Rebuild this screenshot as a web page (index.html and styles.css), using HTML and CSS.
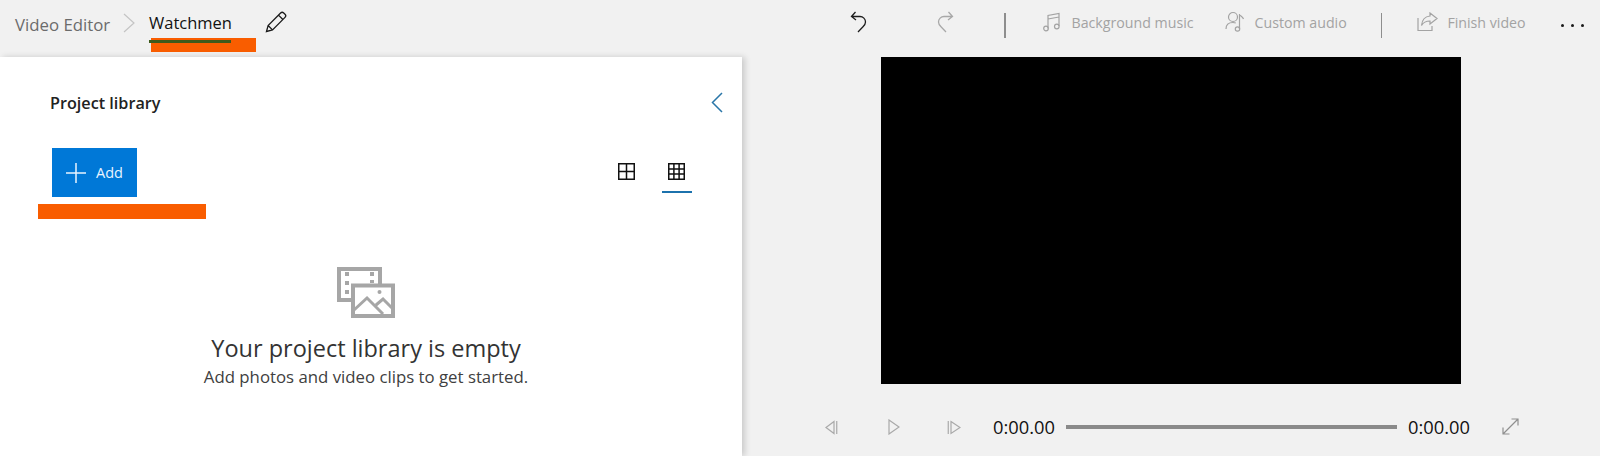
FILE: index.html
```html
<!DOCTYPE html>
<html lang="en">
<head>
<meta charset="utf-8">
<title>Video Editor</title>
<link rel="stylesheet" href="styles.css">
</head>
<body>
<header class="topbar">
  <nav class="crumbs">
    <span class="crumb-root">Video Editor</span>
    <svg class="crumb-chevron" width="12" height="20" viewBox="0 0 12 20"><path d="M1 1l10 9-10 9" /></svg>
    <span class="crumb-title">Watchmen<span class="redact redact-title"></span><span class="title-line"></span></span>
    <svg class="pencil" width="22" height="22" viewBox="0 0 22 22"><path d="M1.5 20.5l1.6-6L15.6 2a2.2 2.2 0 0 1 3.1 0l1.3 1.3a2.2 2.2 0 0 1 0 3.1L7.500 18.900zM3.100 14.500l4.400 4.400M13.500 4.100l4.400 4.400" /></svg>
  </nav>
  <div class="actions">
    <svg class="tool tool-undo" width="18" height="22" viewBox="0 0 18 22"><path d="M5.500 1L1.500 5.500 6 9M1.500 5.500H10a5.500 5.500 0 0 1 5.500 5.500c0 2-1 3.300-2.500 4.800L8 21" /></svg>
    <svg class="tool tool-redo" width="18" height="22" viewBox="0 0 18 22"><path d="M12.500 1l4 4.500L12 9M16.500 5.500H8A5.500 5.500 0 0 0 2.500 11c0 2 1 3.300 2.500 4.800L10 21" /></svg>
    <span class="divider divider-a"></span>
    <button class="action action-music">
      <svg width="18" height="20" viewBox="0 0 18 20"><path d="M5 16.500V3.500L16 1.500V14M5 7l11-2" /><circle cx="3" cy="16.500" r="2.300" /><circle cx="13.800" cy="14.500" r="2.300" /></svg>
      <span>Background music</span>
    </button>
    <button class="action action-audio">
      <svg width="21" height="22" viewBox="0 0 21 22"><circle cx="8" cy="6" r="4.500" /><path d="M1 18c0-4 2.500-6.500 7-6.500 1.200 0 2 .2 2.800.5M14.500 18V3c.3 2 3 2.500 4 5" /><circle cx="12.500" cy="18" r="2.200" /></svg>
      <span>Custom audio</span>
    </button>
    <span class="divider divider-b"></span>
    <button class="action action-finish">
      <svg width="21" height="20" viewBox="0 0 21 20"><path d="M1 6v12.500h14V14M13 1l7 5.500-7 5.500V9c-4 0-6.500 1-8.500 4.500C5 8 8 4.500 13 4z" /></svg>
      <span>Finish video</span>
    </button>
    <span class="more"><i></i><i></i><i></i></span>
  </div>
</header>

<main class="workspace">
  <section class="library">
    <div class="library-head">
      <h1>Project library</h1>
      <svg class="collapse" width="12" height="21" viewBox="0 0 12 21"><path d="M11 1L1.500 10.500 11 20" /></svg>
    </div>
    <div class="library-tools">
      <div class="add-wrap">
        <button class="add">
          <svg width="20" height="20" viewBox="0 0 20 20"><path d="M10 0v20M0 10h20" /></svg>
          <span>Add</span>
        </button>
        <span class="redact redact-add"></span>
      </div>
      <div class="views">
        <span class="view">
          <svg width="17" height="17" viewBox="0 0 17 17"><path d="M.75.75h15.500v15.500H.75zM8.500.75v15.500M.75 8.500h15.500" /></svg>
        </span>
        <span class="view view-active">
          <svg width="17" height="17" viewBox="0 0 17 17"><path d="M.75.75h15.500v15.500H.75zM5.900.75v15.500M11.100.75v15.500M.75 5.900h15.500M.75 11.100h15.500" /></svg>
        </span>
      </div>
    </div>
    <div class="empty">
      <svg class="empty-icon" width="58" height="51" viewBox="0 0 58 51">
        <path class="thick" d="M17 33H2V2H43V18" />
        <path class="thick" d="M16 18.500H56V49H16z" />
        <path class="dots" d="M8 5h4v4H8zM8 14h4v4H8zM8 23h4v4H8zM33 5h4v4h-4zM33 13h4v3h-4z" />
        <path class="thin" d="M17 43l13-12 16 16M39 38l7-6 9 9" />
        <circle class="dot" cx="42.500" cy="25" r="2" />
      </svg>
      <h2>Your project library is empty</h2>
      <p>Add photos and video clips to get started.</p>
    </div>
  </section>

  <section class="preview">
    <div class="screen"></div>
    <div class="transport">
      <svg class="t-icon t-prev" width="13" height="15" viewBox="0 0 13 15"><path d="M9 1.500L1 7.500l8 6zM11.750 1v13" /></svg>
      <svg class="t-icon t-play" width="12" height="16" viewBox="0 0 12 16"><path d="M1 1l10 7-10 7z" /></svg>
      <svg class="t-icon t-next" width="14" height="15" viewBox="0 0 14 15"><path d="M4 1.500l9 6-9 6zM1.250 1v13" /></svg>
      <span class="time">0:00.00</span>
      <span class="track"></span>
      <span class="time">0:00.00</span>
      <svg class="t-icon t-expand" width="17" height="17" viewBox="0 0 17 17"><path d="M1 16L16 1M9.500 1H16V7.500M1 9.500V16H7.500" /></svg>
    </div>
  </section>
</main>
</body>
</html>
```
FILE: styles.css
```css
* { box-sizing: border-box; }
html, body { height: 100%; }
body {
  margin: 0;
  height: 456px;
  overflow: hidden;
  display: flex;
  flex-direction: column;
  background: #f1f1f1;
  color: #000;
  font-family: "Open Sans", "Noto Sans", "Liberation Sans", sans-serif;
}
svg { display: block; fill: none; stroke: currentColor; flex: none; }
button { border: 0; background: none; font: inherit; padding: 0; color: inherit; }

.topbar {
  height: 57px;
  flex: none;
  display: flex;
  justify-content: space-between;
  align-items: flex-start;
}
.crumbs { display: flex; align-items: flex-start; padding-left: 15px; }
.crumb-root { font-size: 16.800px; line-height: 22px; margin-top: 14px; color: #6b6b6b; width: 108px; white-space: nowrap; }
.crumb-chevron { color: #c4c4c4; margin-top: 13px; stroke-width: 1.200; }
.crumb-title { position: relative; font-size: 16.500px; line-height: 22px; margin: 12px 0 0 14px; width: 116px; white-space: nowrap; color: #111; }
.pencil { color: #1a1a1a; margin-top: 11px; stroke-width: 1.300; }
.redact { position: absolute; background: #f95d00; display: block; }
.redact-title { left: 2px; top: 26px; width: 105px; height: 14px; }
.title-line { position: absolute; left: 0; top: 28px; width: 82px; height: 3px; background: #3e5a1c; }

.actions { display: flex; align-items: flex-start; padding-top: 11px; width: 750px; position: relative; }
.tool { stroke-width: 1.300; }
.tool-undo { color: #1d1d1d; }
.tool-redo { color: #a8a8a8; margin-left: 68px; }
.divider { width: 1.500px; height: 25px; background: #8e8e8e; flex: none; }
.divider-a { margin: 2px 0 0 50px; }
.divider-b { margin: 2px 0 0 34px; }
.action { display: flex; align-items: center; height: 22px; color: #a3a3a3; font-size: 14.200px; white-space: nowrap; }
.action svg { stroke-width: 1.200; }
.action-music { margin-left: 37px; gap: 11px; width: 182px; }
.action-audio { gap: 9px; }
.action-audio span { width: 92px; }
.action-finish { margin-left: 35px; gap: 9px; }
.action-finish span { width: 79px; }
.more { display: flex; gap: 7px; margin: 13px 0 0 35px; }
.more i { width: 3px; height: 3px; border-radius: 50%; background: #1a1a1a; display: block; }

.workspace { flex: 1; display: flex; min-height: 0; }
.library {
  width: 742px;
  flex: none;
  background: #fff;
  box-shadow: 3px 0 6px rgba(0, 0, 0, .16);
  padding: 34px 0 0 50px;
  position: relative;
}
.library-head { display: flex; justify-content: space-between; align-items: center; padding-right: 19px; }
.library-head h1 { margin: 0; font-size: 16.200px; line-height: 24px; font-weight: 600; color: #222; }
.collapse { color: #2a76a8; stroke-width: 1.500; margin-top: -2px; }
.library-tools { display: flex; justify-content: space-between; align-items: flex-start; margin-top: 33px; padding: 0 50px 0 2px; }
.add-wrap { position: relative; }
.add {
  width: 85px;
  height: 49px;
  background: #0078d7;
  color: #e8f4ff;
  display: flex;
  align-items: center;
  padding-left: 14px;
  gap: 10px;
  font-size: 14.500px;
}
.add svg { stroke-width: 1.500; }
.redact-add { left: -14px; top: 56px; width: 168px; height: 15px; }
.views { display: flex; gap: 20px; }
.view { width: 30px; height: 45px; padding: 15px 6.500px 0 5.500px; border-bottom: 2.500px solid transparent; }
.view svg { stroke-width: 1.500; color: #111; }
.view-active { border-bottom-color: #1c72ad; }

.empty { margin-top: 70px; display: flex; flex-direction: column; align-items: center; margin-left: -50px; padding-right: 10px; }
.empty-icon { color: #a6a6a6; }
.empty-icon .thick { stroke-width: 4; }
.empty-icon .thin { stroke-width: 3; }
.empty-icon .dots, .empty-icon .dot { fill: currentColor; stroke: none; }
.empty h2 { margin: 14px 0 0; font-size: 23.500px; line-height: 32px; font-weight: 400; color: #333; white-space: nowrap; }
.empty p { margin: 2px 0 0; font-size: 16.800px; line-height: 22px; color: #404040; white-space: nowrap; }

.preview { flex: 1; padding-left: 139px; position: relative; }
.screen { width: 580px; height: 327px; background: #000; }
.transport { display: flex; align-items: center; margin: 30px 0 0 -56px; height: 26px; }
.t-icon { color: #a9a9a9; stroke-width: 1.200; }
.t-play { margin-left: 50px; }
.t-next { margin-left: 47px; }
.time { font-size: 18.300px; line-height: 26px; color: #111; white-space: nowrap; width: 62px; }
.t-next + .time { margin-left: 32px; }
.track { width: 331px; height: 4px; background: #8a8a8a; margin: 0 11px; flex: none; }
.t-expand { margin-left: 32px; margin-top: -2px; color: #8f8f8f; }
```
